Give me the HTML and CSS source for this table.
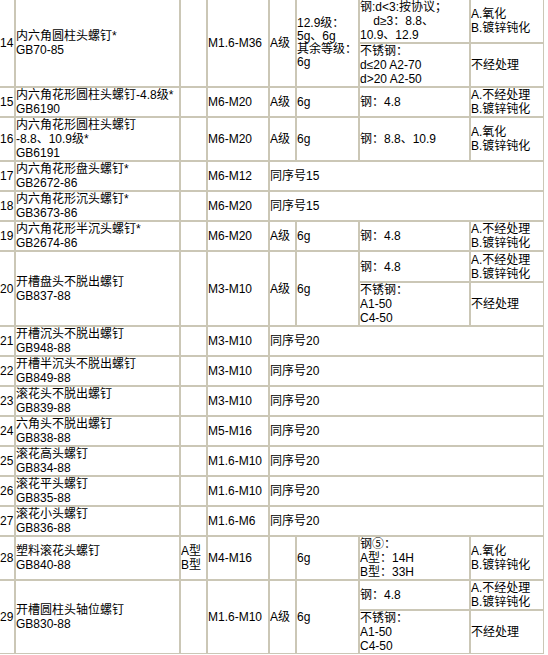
FILE: index.html
```html
<!DOCTYPE html>
<html lang="zh">
<head>
<meta charset="utf-8">
<title>螺钉</title>
<link rel="stylesheet" href="styles.css">
</head>
<body>
<table class="spec">
  <colgroup>
    <col class="c-no">
    <col class="c-name">
    <col class="c-type">
    <col class="c-range">
    <col class="c-grade">
    <col class="c-fit">
    <col class="c-mat">
    <col class="c-surf">
  </colgroup>
  <tbody>
    <tr>
      <td rowspan="2">14</td>
      <td rowspan="2">内六角圆柱头螺钉*<br>GB70-85</td>
      <td rowspan="2"></td>
      <td rowspan="2">M1.6-M36</td>
      <td rowspan="2">A级</td>
      <td rowspan="2" class="tight">12.9级：<br>5g、6g<br>其余等级：<br>6g</td>
      <td>钢:d&lt;3:按协议；<br>&nbsp;&nbsp;&nbsp;&nbsp;d≥3：8.8、<br>10.9、12.9</td>
      <td>A.氧化<br>B.镀锌钝化</td>
    </tr>
    <tr>
      <td>不锈钢：<br>d≤20 A2-70<br>d&gt;20 A2-50</td>
      <td>不经处理</td>
    </tr>
    <tr>
      <td>15</td>
      <td>内六角花形圆柱头螺钉-4.8级*<br>GB6190</td>
      <td></td>
      <td>M6-M20</td>
      <td>A级</td>
      <td>6g</td>
      <td>钢：4.8</td>
      <td>A.不经处理<br>B.镀锌钝化</td>
    </tr>
    <tr>
      <td>16</td>
      <td>内六角花形圆柱头螺钉<br>-8.8、10.9级*<br>GB6191</td>
      <td></td>
      <td>M6-M20</td>
      <td>A级</td>
      <td>6g</td>
      <td>钢：8.8、10.9</td>
      <td>A.氧化<br>B.镀锌钝化</td>
    </tr>
    <tr>
      <td>17</td>
      <td>内六角花形盘头螺钉*<br>GB2672-86</td>
      <td></td>
      <td>M6-M12</td>
      <td colspan="4">同序号15</td>
    </tr>
    <tr>
      <td>18</td>
      <td>内六角花形沉头螺钉*<br>GB3673-86</td>
      <td></td>
      <td>M6-M20</td>
      <td colspan="4">同序号15</td>
    </tr>
    <tr>
      <td>19</td>
      <td>内六角花形半沉头螺钉*<br>GB2674-86</td>
      <td></td>
      <td>M6-M20</td>
      <td>A级</td>
      <td>6g</td>
      <td>钢：4.8</td>
      <td>A.不经处理<br>B.镀锌钝化</td>
    </tr>
    <tr class="r-tall">
      <td rowspan="2">20</td>
      <td rowspan="2">开槽盘头不脱出螺钉<br>GB837-88</td>
      <td rowspan="2"></td>
      <td rowspan="2">M3-M10</td>
      <td rowspan="2">A级</td>
      <td rowspan="2">6g</td>
      <td>钢：4.8</td>
      <td>A.不经处理<br>B.镀锌钝化</td>
    </tr>
    <tr>
      <td>不锈钢：<br>A1-50<br>C4-50</td>
      <td>不经处理</td>
    </tr>
    <tr>
      <td>21</td>
      <td>开槽沉头不脱出螺钉<br>GB948-88</td>
      <td></td>
      <td>M3-M10</td>
      <td colspan="4">同序号20</td>
    </tr>
    <tr>
      <td>22</td>
      <td>开槽半沉头不脱出螺钉<br>GB849-88</td>
      <td></td>
      <td>M3-M10</td>
      <td colspan="4">同序号20</td>
    </tr>
    <tr>
      <td>23</td>
      <td>滚花头不脱出螺钉<br>GB839-88</td>
      <td></td>
      <td>M3-M10</td>
      <td colspan="4">同序号20</td>
    </tr>
    <tr>
      <td>24</td>
      <td>六角头不脱出螺钉<br>GB838-88</td>
      <td></td>
      <td>M5-M16</td>
      <td colspan="4">同序号20</td>
    </tr>
    <tr>
      <td>25</td>
      <td>滚花高头螺钉<br>GB834-88</td>
      <td></td>
      <td>M1.6-M10</td>
      <td colspan="4">同序号20</td>
    </tr>
    <tr>
      <td>26</td>
      <td>滚花平头螺钉<br>GB835-88</td>
      <td></td>
      <td>M1.6-M10</td>
      <td colspan="4">同序号20</td>
    </tr>
    <tr>
      <td>27</td>
      <td>滚花小头螺钉<br>GB836-88</td>
      <td></td>
      <td>M1.6-M6</td>
      <td colspan="4">同序号20</td>
    </tr>
    <tr>
      <td>28</td>
      <td>塑料滚花头螺钉<br>GB840-88</td>
      <td>A型<br>B型</td>
      <td>M4-M16</td>
      <td></td>
      <td>6g</td>
      <td>钢⑤：<br>A型：14H<br>B型：33H</td>
      <td>A.氧化<br>B.镀锌钝化</td>
    </tr>
    <tr>
      <td rowspan="2">29</td>
      <td rowspan="2">开槽圆柱头轴位螺钉<br>GB830-88</td>
      <td rowspan="2"></td>
      <td rowspan="2">M1.6-M10</td>
      <td rowspan="2">A级</td>
      <td rowspan="2">6g</td>
      <td>钢：4.8</td>
      <td>A.不经处理<br>B.镀锌钝化</td>
    </tr>
    <tr>
      <td>不锈钢：<br>A1-50<br>C4-50</td>
      <td>不经处理</td>
    </tr>
  </tbody>
</table>
</body>
</html>
```

FILE: styles.css
```css
html, body {
  margin: 0;
  padding: 0;
  background: #ffffff;
}

body {
  overflow: hidden;
}

.spec {
  margin: -1px 0 0 -1px;
  width: 545px;
  table-layout: fixed;
  border-collapse: separate;
  border-spacing: 0;
  font-family: "Liberation Sans", "Noto Sans CJK SC", sans-serif;
  font-size: 12px;
  line-height: 14px;
  color: #000000;
}

.spec td {
  box-sizing: border-box;
  padding: 0;
  border: 1px solid #cbc7b6;
  vertical-align: middle;
  white-space: nowrap;
  overflow: hidden;
}

.spec .r-tall td {
  height: 31px;
}

.spec td.tight {
  line-height: 13px;
}

.c-no { width: 16px; }
.c-name { width: 165px; }
.c-type { width: 27px; }
.c-range { width: 62px; }
.c-grade { width: 27px; }
.c-fit { width: 63px; }
.c-mat { width: 111px; }
.c-surf { width: 74px; }
```
